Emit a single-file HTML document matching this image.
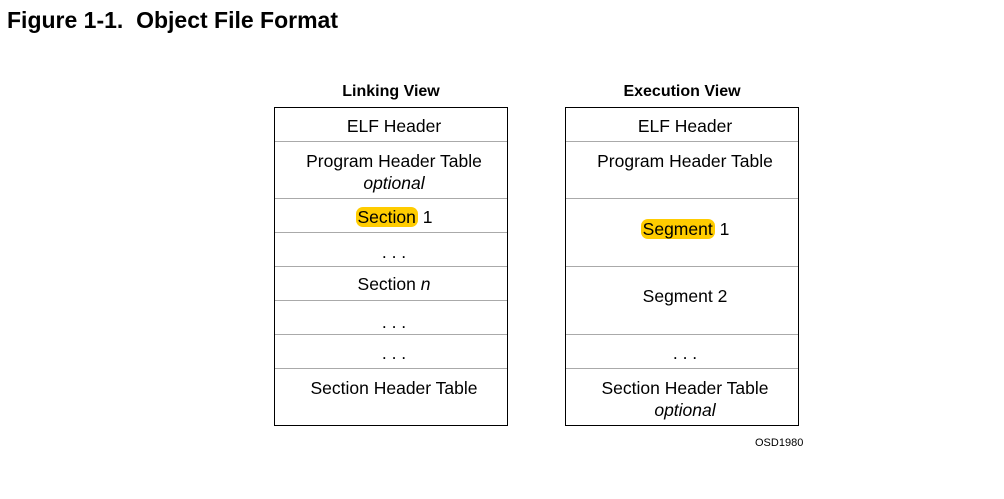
<!DOCTYPE html><html><head><style>
body{margin:0;width:1004px;height:499px;background:#fff;font-family:"Liberation Sans",sans-serif;position:relative;overflow:hidden;color:#000}
.a{position:absolute}
.box{position:absolute;border:1px solid #000;width:232px;top:107px;height:317px}
.ln{position:absolute;left:0;width:232px;height:1px;background:#aaa}
.t{position:absolute;left:3px;width:232px;text-align:center;font-size:17.5px;line-height:22px}
.hl{background:#fc0;border-radius:7px;padding:0 2px}
i{font-style:italic}
.h{position:absolute;font-weight:bold;font-size:16px;width:232px;text-align:center;top:83px}
</style></head><body>
<div class="a" style="left:7px;top:7px;font-weight:bold;font-size:23px">Figure 1-1.&nbsp; Object File Format</div>
<div class="h" style="left:275px">Linking View</div>
<div class="h" style="left:566px">Execution View</div>
<div class="box" style="left:274px">
<div class="ln" style="top:33px"></div><div class="ln" style="top:90px"></div><div class="ln" style="top:124px"></div><div class="ln" style="top:158px"></div><div class="ln" style="top:192px"></div><div class="ln" style="top:226px"></div><div class="ln" style="top:260px"></div>
<div class="t" style="top:7px">ELF Header</div>
<div class="t" style="top:42px">Program Header Table<br><i>optional</i></div>
<div class="t" style="top:98px"><span class="hl">Section</span> 1</div>
<div class="t" style="top:133px">. . .</div>
<div class="t" style="top:165px">Section <i>n</i></div>
<div class="t" style="top:203px">. . .</div>
<div class="t" style="top:234px">. . .</div>
<div class="t" style="top:269px">Section Header Table</div>
</div>
<div class="box" style="left:565px">
<div class="ln" style="top:33px"></div><div class="ln" style="top:90px"></div><div class="ln" style="top:158px"></div><div class="ln" style="top:226px"></div><div class="ln" style="top:260px"></div>
<div class="t" style="top:7px">ELF Header</div>
<div class="t" style="top:42px">Program Header Table</div>
<div class="t" style="top:110px"><span class="hl">Segment</span> 1</div>
<div class="t" style="top:177px">Segment 2</div>
<div class="t" style="top:234px">. . .</div>
<div class="t" style="top:269px">Section Header Table<br><i>optional</i></div>
</div>
<div class="a" style="left:755px;top:437px;font-size:11px">OSD1980</div>
</body></html>
